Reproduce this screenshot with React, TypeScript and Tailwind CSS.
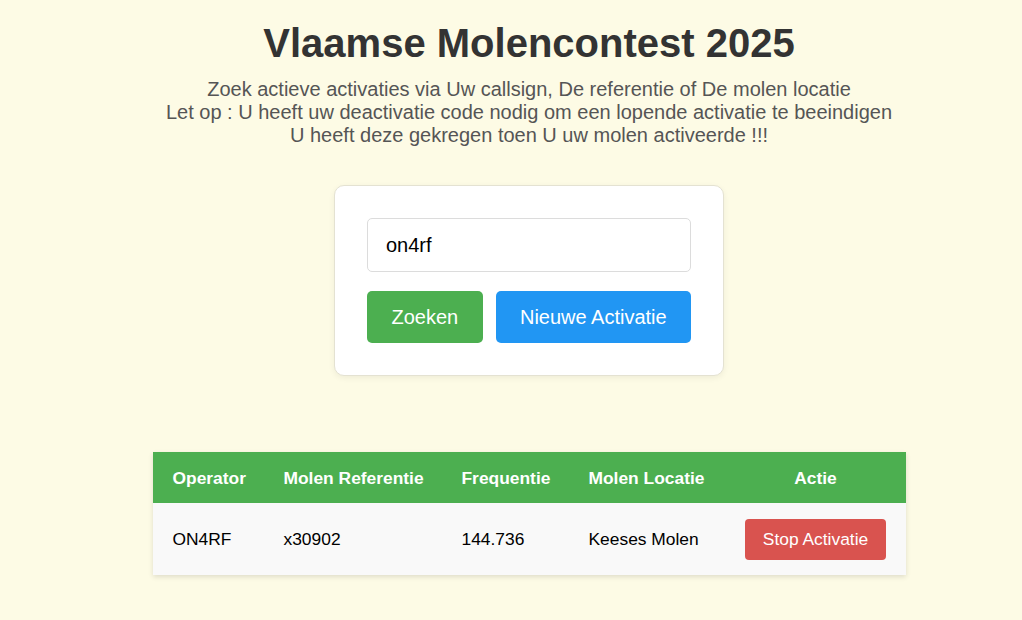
import { useState } from "react";

type Activation = {
  operator: string;
  reference: string;
  frequency: string;
  location: string;
};

const activations: Activation[] = [
  {
    operator: "ON4RF",
    reference: "x30902",
    frequency: "144.736",
    location: "Keeses Molen",
  },
];

export default function App() {
  const [query, setQuery] = useState("on4rf");

  return (
    <div className="min-h-screen bg-[#fdfbe5] pl-[36px] pt-[20px] font-['Liberation_Sans',Arial,sans-serif]">
      <h1 className="text-center text-[40px] leading-[46px] font-bold text-[#333]">
        Vlaamse Molencontest 2025
      </h1>
      <p className="mt-[12px] text-center text-[20px] leading-[23px] text-[#555]">
        Zoek actieve activaties via Uw callsign, De referentie of De molen
        locatie
        <br />
        Let op : U heeft uw deactivatie code nodig om een lopende activatie te
        beeindigen
        <br />
        U heeft deze gekregen toen U uw molen activeerde !!!
      </p>

      <div className="mx-auto mt-[38px] w-[390px] rounded-[10px] border border-[#e4e2d2] bg-white p-[32px] shadow-[0_2px_6px_rgba(0,0,0,0.06)]">
        <input
          value={query}
          onChange={(e) => setQuery(e.target.value)}
          className="block h-[54px] w-full rounded-[5px] border border-[#dcdcdc] px-[18px] text-[20px] text-black outline-none"
        />
        <div className="mt-[19px] flex gap-[13px]">
          <button className="h-[52px] w-[116px] rounded-[5px] bg-[#4caf50] text-[20px] text-white">
            Zoeken
          </button>
          <button className="h-[52px] w-[196px] rounded-[5px] bg-[#2196f3] text-[20px] text-white">
            Nieuwe Activatie
          </button>
        </div>
      </div>

      <table className="mx-auto mt-[76px] w-[753px] table-fixed border-collapse text-[17.4px] leading-[20px] shadow-[0_2px_5px_rgba(0,0,0,0.12)]">
        <colgroup>
          <col className="w-[111px]" />
          <col className="w-[178px]" />
          <col className="w-[127px]" />
          <col className="w-[157px]" />
          <col className="w-[180px]" />
        </colgroup>
        <thead>
          <tr className="h-[51px] bg-[#4caf50] text-white whitespace-nowrap">
            <th className="px-[20px] text-left font-bold">Operator</th>
            <th className="px-[20px] text-left font-bold">Molen Referentie</th>
            <th className="px-[20px] text-left font-bold">Frequentie</th>
            <th className="px-[20px] text-left font-bold">Molen Locatie</th>
            <th className="px-0 text-center font-bold">Actie</th>
          </tr>
        </thead>
        <tbody>
          {activations.map((a) => (
            <tr
              key={a.operator}
              className="h-[72px] bg-[#f9f9f9] text-black whitespace-nowrap"
            >
              <td className="px-[20px]">{a.operator}</td>
              <td className="px-[20px]">{a.reference}</td>
              <td className="px-[20px]">{a.frequency}</td>
              <td className="px-[20px]">{a.location}</td>
              <td className="px-0 text-center">
                <button className="h-[41px] rounded-[4px] bg-[#d9534f] px-[18px] text-white">
                  Stop Activatie
                </button>
              </td>
            </tr>
          ))}
        </tbody>
      </table>
    </div>
  );
}
